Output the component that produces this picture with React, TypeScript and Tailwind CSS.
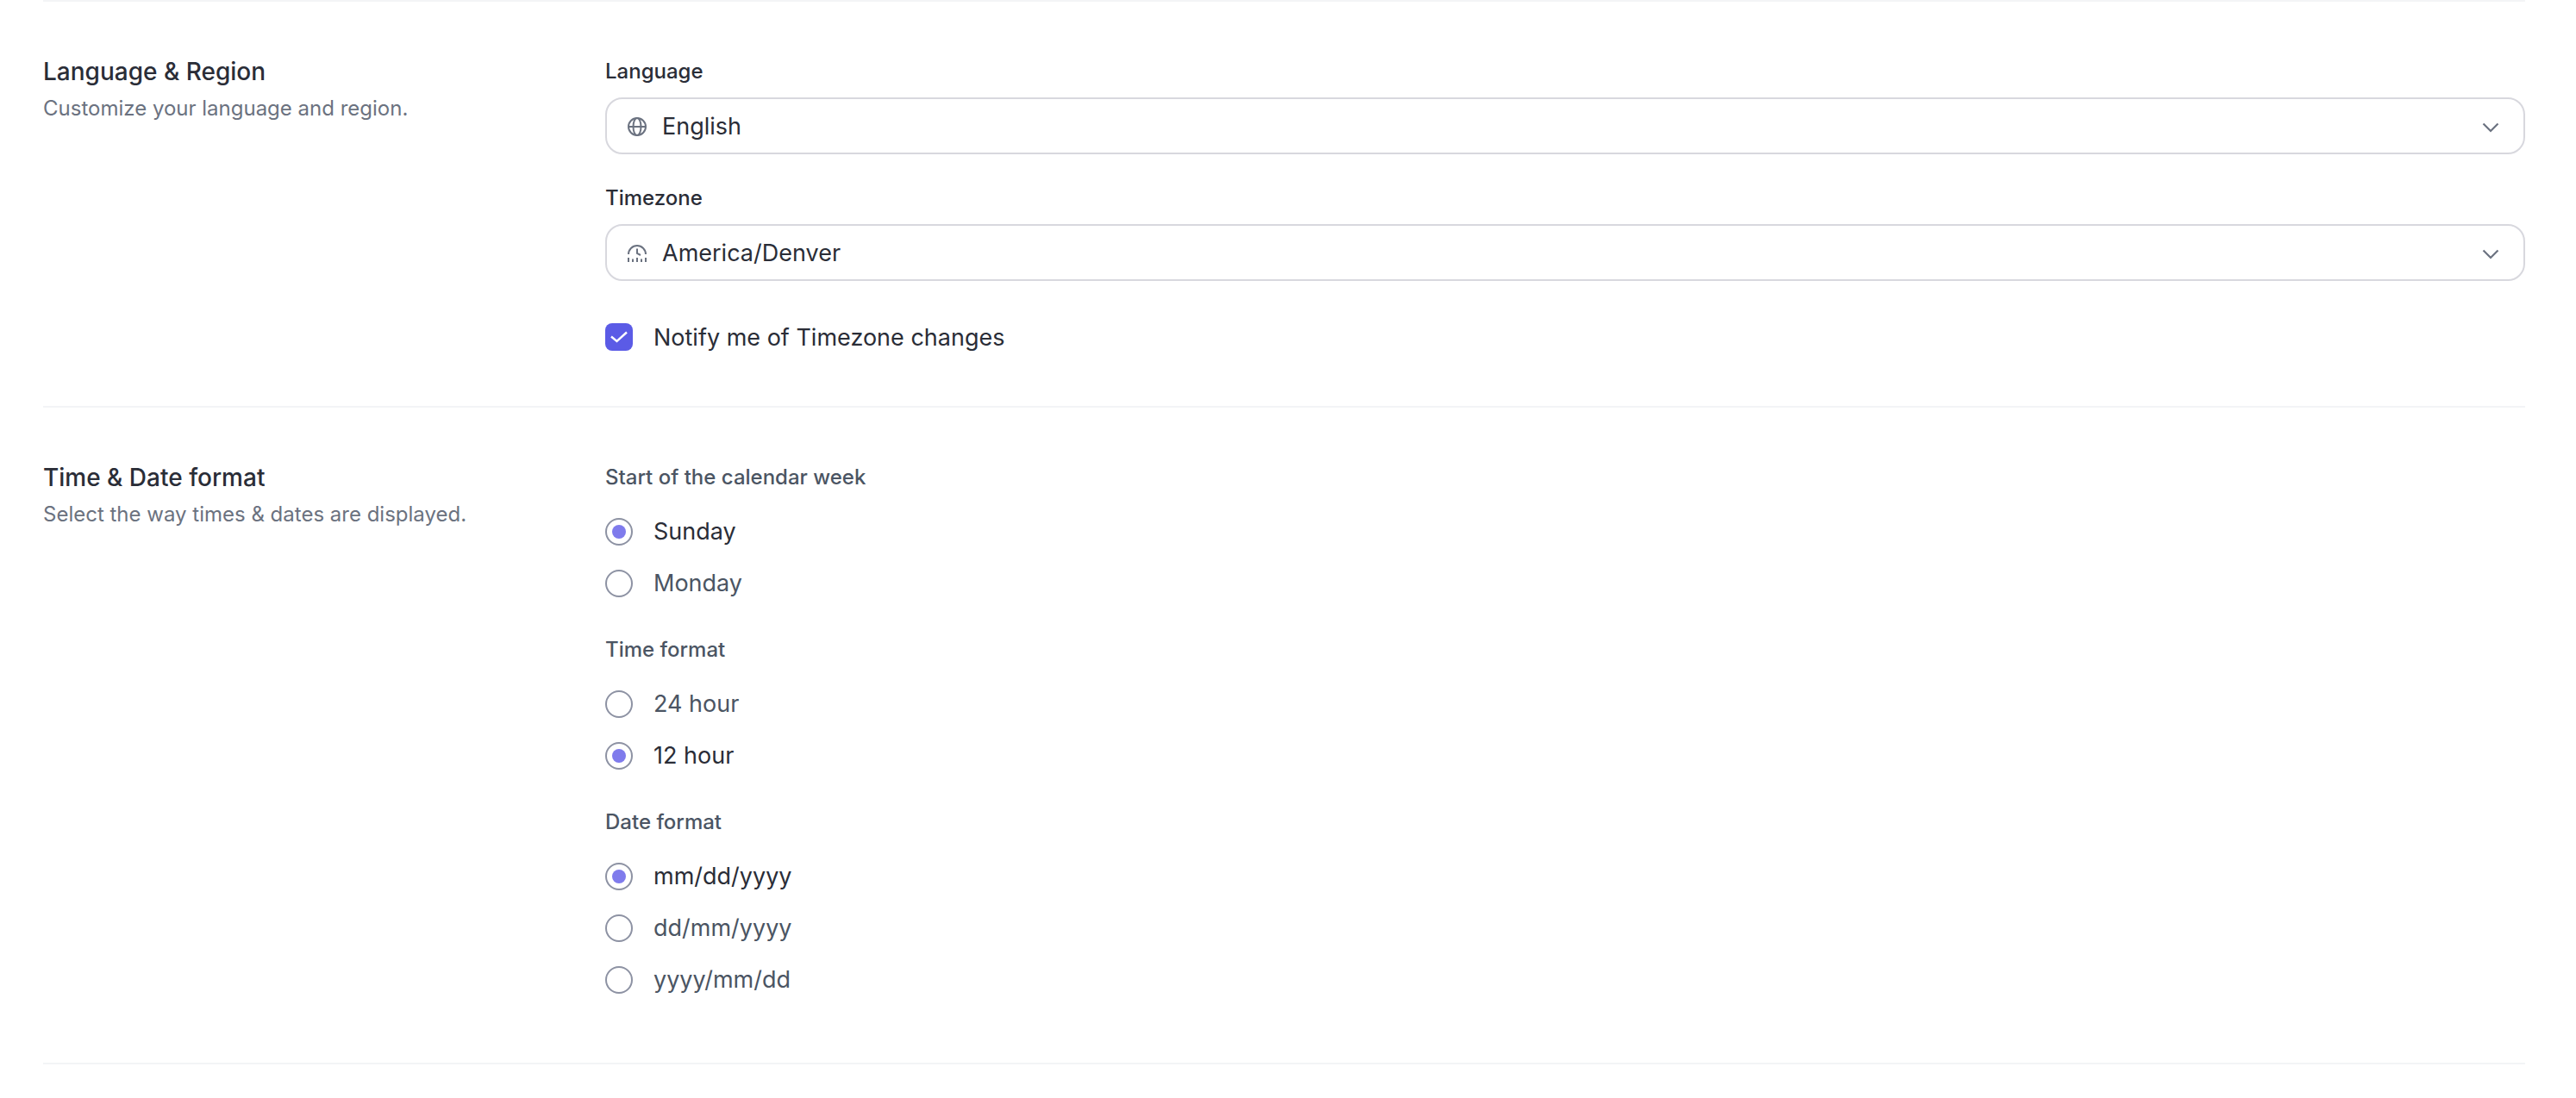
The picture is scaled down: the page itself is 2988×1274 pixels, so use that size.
const selectBox = 'mt-[9px] flex h-[66px] items-center rounded-[20px] border-2 border-[#d8d8de] bg-white pl-[23px] pr-[28px]';

function GlobeIcon() {
  return (
    <svg viewBox="0 0 24 24" className="mt-[2px] h-[24px] w-[24px] shrink-0 text-[#6b7280]" fill="none" stroke="currentColor" strokeWidth="2">
      <circle cx="12" cy="12" r="10" />
      <ellipse cx="12" cy="12" rx="4.5" ry="10" />
      <path d="M2 12h20" />
    </svg>
  );
}

function TimezoneIcon() {
  return (
    <svg viewBox="0 0 24 24" className="mt-[2px] h-[24px] w-[24px] shrink-0 text-[#6b7280]" fill="none" stroke="currentColor" strokeWidth="2">
      <path d="M2 13a10 10 0 0 1 20 0" />
      <path d="M12 6.5V12l4 2" />
      <path d="M2 17v5M7 18.5V22M12 17v5M17 18.5V22M22 17v5" />
    </svg>
  );
}

function Chevron() {
  return (
    <svg viewBox="0 0 20 12" className="ml-auto mt-[4px] h-[12px] w-[20px] text-[#6b7280]" fill="none" stroke="currentColor" strokeWidth="2.2">
      <path d="M1.5 1.5 10 10l8.5-8.5" />
    </svg>
  );
}

function Radio({ label, checked }: { label: string; checked?: boolean }) {
  return (
    <div className="flex h-[40px] items-center gap-[24px]">
      <span className="flex h-[32px] w-[32px] items-center justify-center rounded-full border-2 border-[#8d92a3] bg-white">
        {checked && <span className="h-[16px] w-[16px] rounded-full bg-[#7f7bec]" />}
      </span>
      <span className={`text-[27px] leading-[40px] ${checked ? 'text-[#2a2d37]' : 'text-[#4b5563]'}`}>{label}</span>
    </div>
  );
}

function RadioGroup({ title, options, first }: { title: string; options: { label: string; checked?: boolean }[]; first?: boolean }) {
  return (
    <div className={first ? '' : 'mt-[36px]'}>
      <div className="text-[24px] font-medium leading-[42px] text-[#4b5563]">{title}</div>
      <div className="mt-[22px] flex flex-col gap-[20px]">
        {options.map(o => (
          <Radio key={o.label} label={o.label} checked={o.checked} />
        ))}
      </div>
    </div>
  );
}

export default function App() {
  return (
    <div className="h-[1274px] overflow-hidden bg-white pl-[50px] pr-[59px] font-['Inter',sans-serif] antialiased">
      <div className="h-[2px] bg-[#f3f4f6]" />

      <section className="flex border-b-2 border-[#f3f4f6] pb-[60px] pt-[60px]">
        <div className="w-[652px] shrink-0">
          <h3 className="text-[28px] font-medium leading-[42px] text-[#2a2d37]">Language &amp; Region</h3>
          <p className="mt-[2px] text-[24px] leading-[40px] text-[#6b7280]">Customize your language and region.</p>
        </div>
        <div className="flex-1">
          <div className="text-[24px] font-medium leading-[42px] text-[#2a2d37]">Language</div>
          <div className={selectBox}>
            <GlobeIcon />
            <span className="ml-[17px] mt-[3px] text-[27px] text-[#2a2d37]">English</span>
            <Chevron />
          </div>
          <div className="mt-[30px] text-[24px] font-medium leading-[42px] text-[#2a2d37]">Timezone</div>
          <div className={selectBox}>
            <TimezoneIcon />
            <span className="ml-[17px] mt-[3px] text-[27px] text-[#2a2d37]">America/Denver</span>
            <Chevron />
          </div>
          <div className="mt-[45px] flex h-[40px] items-center gap-[24px]">
            <span className="flex h-[32px] w-[32px] items-center justify-center rounded-[8px] bg-[#5b5be6]">
              <svg viewBox="0 0 20 20" className="h-[20px] w-[20px]" fill="none" stroke="white" strokeWidth="2.4">
                <path d="M1 9.5 7.5 15 19 4.5" />
              </svg>
            </span>
            <span className="pt-[2px] text-[27px] leading-[40px] text-[#2a2d37]">Notify me of Timezone changes</span>
          </div>
        </div>
      </section>

      <section className="flex border-b-2 border-[#f3f4f6] pb-[76px] pt-[60px]">
        <div className="w-[652px] shrink-0">
          <h3 className="text-[28px] font-medium leading-[42px] text-[#2a2d37]">Time &amp; Date format</h3>
          <p className="mt-[2px] text-[24px] leading-[40px] text-[#6b7280]">Select the way times &amp; dates are displayed.</p>
        </div>
        <div className="flex-1">
          <RadioGroup first title="Start of the calendar week" options={[{ label: 'Sunday', checked: true }, { label: 'Monday' }]} />
          <RadioGroup title="Time format" options={[{ label: '24 hour' }, { label: '12 hour', checked: true }]} />
          <RadioGroup title="Date format" options={[{ label: 'mm/dd/yyyy', checked: true }, { label: 'dd/mm/yyyy' }, { label: 'yyyy/mm/dd' }]} />
        </div>
      </section>
    </div>
  );
}
